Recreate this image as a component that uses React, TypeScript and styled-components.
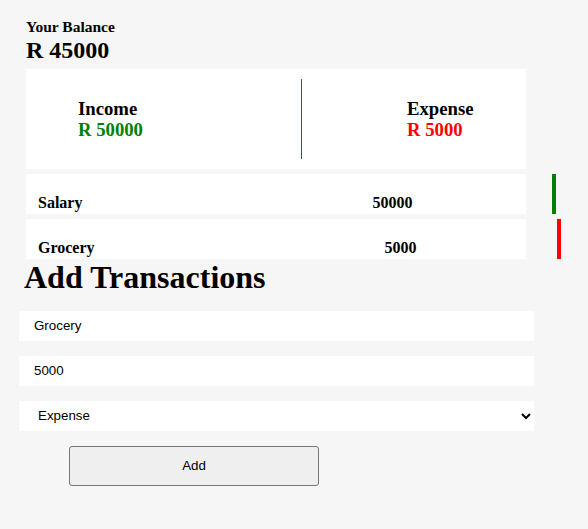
import React from "react";
import styled, { createGlobalStyle } from "styled-components";

const GlobalStyle = createGlobalStyle`
  html, body {
    margin: 0;
    padding: 0;
    background: #f6f6f6;
    font-family: "Liberation Serif", "Times New Roman", serif;
    color: #000;
  }
`;

const Page = styled.div`
  padding-top: 18px;
  width: 588px;
  min-height: 529px;
  box-sizing: border-box;
`;

const Summary = styled.section`
  margin-left: 26px;
  width: 500px;
`;

const BalanceLabel = styled.h4`
  margin: 0;
  font-size: 15.5px;
  line-height: 18px;
  font-weight: bold;
`;

const BalanceAmount = styled.h2`
  margin: 0;
  font-size: 24px;
  line-height: 28px;
  font-weight: bold;
`;

const Totals = styled.div`
  margin-top: 5px;
  height: 100px;
  box-sizing: border-box;
  padding: 10px 0;
  background: #fff;
  display: grid;
  grid-template-columns: 275px 1px 1fr;
  align-items: center;
`;

const TotalBlock = styled.div<{ $pad: number }>`
  padding-left: ${(p) => p.$pad}px;
`;

const TotalTitle = styled.h3`
  margin: 0;
  font-size: 18.72px;
  line-height: 21.5px;
  font-weight: bold;
`;

const TotalValue = styled.p<{ $color: string }>`
  margin: 0;
  font-size: 18.72px;
  line-height: 21.5px;
  font-weight: bold;
  color: ${(p) => p.$color};
`;

const Divider = styled.div`
  align-self: stretch;
  background: #008000;
  width: 1px;
`;

const List = styled.ul`
  list-style: none;
  margin: 0;
  padding: 0;
`;

const Item = styled.li`
  margin-top: 5px;
  width: 500px;
  height: 40px;
  background: #fff;
  display: flex;
  align-items: flex-end;
`;

const ItemText = styled.span<{ $gap: number }>`
  flex-shrink: 0;
  margin-left: ${(p) => p.$gap}px;
  padding-bottom: 2px;
  font-size: 16px;
  line-height: 18px;
  font-weight: bold;
`;

const ItemBar = styled.span<{ $color: string }>`
  flex-shrink: 0;
  align-self: stretch;
  margin-left: 140px;
  width: 4px;
  background: ${(p) => p.$color};
`;

const Heading = styled.h1`
  margin: 0 0 0 24px;
  font-size: 32px;
  line-height: 37px;
  font-weight: bold;
`;

const Form = styled.form`
  margin: 15px 0 0 19px;
  display: flex;
  flex-direction: column;
  align-items: flex-start;
  gap: 15px;
`;

const Field = styled.input`
  width: 515px;
  height: 30px;
  box-sizing: border-box;
  border: none;
  outline: none;
  background: #fff;
  padding: 0 15px 2px;
  font-family: "Liberation Sans", Arial, sans-serif;
  font-size: 13.333px;
  color: #000;
`;

const Select = styled.select`
  width: 515px;
  height: 30px;
  box-sizing: border-box;
  border: none;
  outline: none;
  background: #fff;
  padding: 0 0 2px 15px;
  font-family: "Liberation Sans", Arial, sans-serif;
  font-size: 13.333px;
  color: #000;
`;

const AddButton = styled.button`
  margin-left: 50px;
  width: 250px;
  height: 40px;
  box-sizing: border-box;
  background: #efefef;
  border: 1px solid #767676;
  border-radius: 3px;
  padding: 0 0 2px;
  font-family: "Liberation Sans", Arial, sans-serif;
  font-size: 13.333px;
  color: #000;
`;

const transactions = [
  { name: "Salary", amount: "50000", color: "#008000" },
  { name: "Grocery", amount: "5000", color: "#ff0000" },
];

export default function App() {
  return (
    <>
      <GlobalStyle />
      <Page>
        <Summary>
          <BalanceLabel>Your Balance</BalanceLabel>
          <BalanceAmount>R 45000</BalanceAmount>
          <Totals>
            <TotalBlock $pad={52}>
              <TotalTitle>Income</TotalTitle>
              <TotalValue $color="#008000">R 50000</TotalValue>
            </TotalBlock>
            <Divider />
            <TotalBlock $pad={105}>
              <TotalTitle>Expense</TotalTitle>
              <TotalValue $color="#ff0000">R 5000</TotalValue>
            </TotalBlock>
          </Totals>
          <List>
            {transactions.map((t) => (
              <Item key={t.name}>
                <ItemText $gap={12}>{t.name}</ItemText>
                <ItemText $gap={290}>{t.amount}</ItemText>
                <ItemBar $color={t.color} />
              </Item>
            ))}
          </List>
        </Summary>
        <Heading>Add Transactions</Heading>
        <Form onSubmit={(e) => e.preventDefault()}>
          <Field type="text" defaultValue="Grocery" />
          <Field type="number" defaultValue="5000" />
          <Select defaultValue="Expense">
            <option value="Income">Income</option>
            <option value="Expense">Expense</option>
          </Select>
          <AddButton type="submit">Add</AddButton>
        </Form>
      </Page>
    </>
  );
}
